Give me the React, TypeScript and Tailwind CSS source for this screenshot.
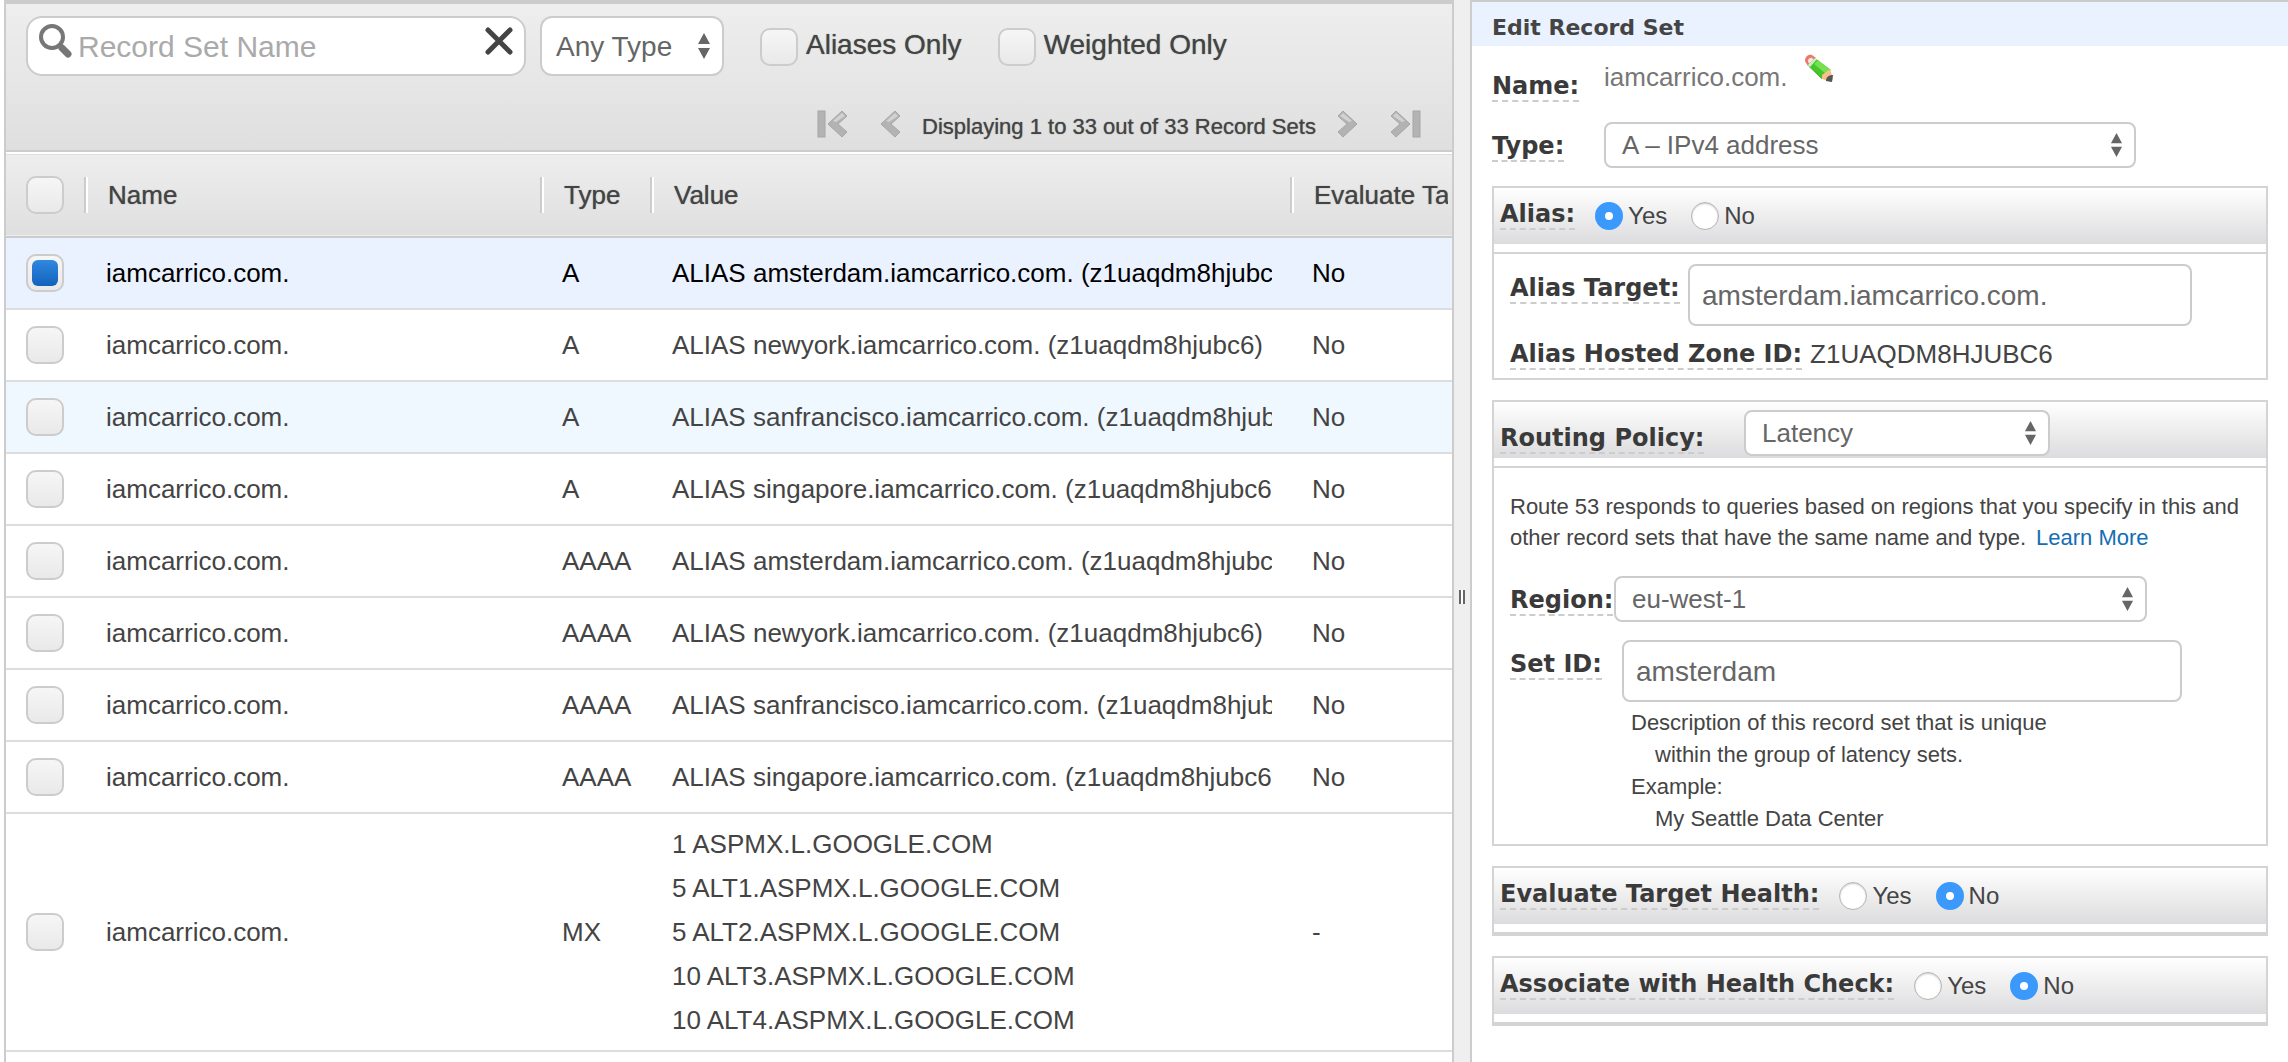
import React from "react";

type RecordRow = {
  name: string;
  type: string;
  values: string[];
  evaluate: string;
  state?: "selected" | "hover";
};

const ZONE = "(z1uaqdm8hjubc6)";

const RECORDS: RecordRow[] = [
  { name: "iamcarrico.com.", type: "A", values: [`ALIAS amsterdam.iamcarrico.com. ${ZONE}`], evaluate: "No", state: "selected" },
  { name: "iamcarrico.com.", type: "A", values: [`ALIAS newyork.iamcarrico.com. ${ZONE}`], evaluate: "No" },
  { name: "iamcarrico.com.", type: "A", values: [`ALIAS sanfrancisco.iamcarrico.com. ${ZONE}`], evaluate: "No", state: "hover" },
  { name: "iamcarrico.com.", type: "A", values: [`ALIAS singapore.iamcarrico.com. ${ZONE}`], evaluate: "No" },
  { name: "iamcarrico.com.", type: "AAAA", values: [`ALIAS amsterdam.iamcarrico.com. ${ZONE}`], evaluate: "No" },
  { name: "iamcarrico.com.", type: "AAAA", values: [`ALIAS newyork.iamcarrico.com. ${ZONE}`], evaluate: "No" },
  { name: "iamcarrico.com.", type: "AAAA", values: [`ALIAS sanfrancisco.iamcarrico.com. ${ZONE}`], evaluate: "No" },
  { name: "iamcarrico.com.", type: "AAAA", values: [`ALIAS singapore.iamcarrico.com. ${ZONE}`], evaluate: "No" },
  {
    name: "iamcarrico.com.",
    type: "MX",
    values: [
      "1 ASPMX.L.GOOGLE.COM",
      "5 ALT1.ASPMX.L.GOOGLE.COM",
      "5 ALT2.ASPMX.L.GOOGLE.COM",
      "10 ALT3.ASPMX.L.GOOGLE.COM",
      "10 ALT4.ASPMX.L.GOOGLE.COM",
    ],
    evaluate: "-",
  },
];

const ROW_STYLE = {
  selected: "bg-[#eaf2ff] text-black",
  hover: "bg-[#f0f8ff] text-[#444]",
  plain: "bg-white text-[#444]",
};

function CheckBox(props: React.InputHTMLAttributes<HTMLInputElement>) {
  return (
    <input
      type="checkbox"
      className="block size-[38px] shrink-0 appearance-none rounded-[10px] border-2 border-[#ccc] bg-linear-to-b from-[#f6f6f6] to-[#e9e9e9] p-1 checked:before:block checked:before:size-[26px] checked:before:rounded-md checked:before:bg-linear-to-b checked:before:from-[#3088e0] checked:before:to-[#1162bb] checked:before:content-['']"
      {...props}
    />
  );
}

function SelectArrows({ className }: { className: string }) {
  return (
    <svg viewBox="0 0 14 26" className={`pointer-events-none absolute top-1/2 -translate-y-1/2 fill-[#666] ${className}`} aria-hidden="true">
      <path d="M7 0 13 11H1zM7 26 13 15H1z" />
    </svg>
  );
}

function FormSelect({ id, value, className }: { id: string; value: string; className: string }) {
  return (
    <div className={`relative max-w-full ${className}`}>
      <select
        id={id}
        defaultValue={value}
        className="block h-[46px] w-full appearance-none rounded-lg border-2 border-[#ccc] bg-white pr-10 pl-4 text-[26px] leading-8 text-[#666]"
      >
        <option>{value}</option>
      </select>
      <SelectArrows className="right-[13px] h-6 w-[13px]" />
    </div>
  );
}

function FormInput({ id, value, className }: { id: string; value: string; className: string }) {
  return (
    <input
      id={id}
      type="text"
      defaultValue={value}
      className={`h-[62px] max-w-full rounded-lg border-2 border-[#ccc] bg-white px-3 pt-[2px] text-[28px] text-[#666] ${className}`}
    />
  );
}

const LABEL =
  "inline-block border-b-2 border-dashed border-[#ccc] font-['DejaVu_Sans',sans-serif] text-2xl/7 font-bold whitespace-nowrap text-[#3a3a3a]";

function FieldLabel({ htmlFor, children }: { htmlFor: string; children: React.ReactNode }) {
  return (
    <label htmlFor={htmlFor} className={LABEL}>
      {children}
    </label>
  );
}

function YesNo({ name, label, value }: { name: string; label: string; value: "Yes" | "No" }) {
  return (
    <fieldset className="flex items-start">
      <legend className={`float-left mr-5 ${LABEL}`}>{label}</legend>
      <div className="flex gap-6 pt-[2px]">
        {["Yes", "No"].map((option) => (
          <label key={option} className="flex gap-[5px] text-2xl/7 text-[#444]">
            <input
              type="radio"
              name={name}
              defaultChecked={option === value}
              className="size-7 appearance-none rounded-full border border-[#b4b4b4] bg-white shadow-[inset_0_1px_2px_#ccc] checked:border-[10px] checked:border-[#3b99fc] checked:shadow-none"
            />
            {option}
          </label>
        ))}
      </div>
    </fieldset>
  );
}

function Section({ header, headerClass, children }: { header: React.ReactNode; headerClass: string; children?: React.ReactNode }) {
  return (
    <section className="border-2 border-[#d4d4d4]">
      <div className="border-b-2 border-[#d4d4d4] pb-2">
        <div className={`flex h-14 items-start bg-linear-to-b from-white to-[#dcdcde] px-[6px] ${headerClass}`}>{header}</div>
      </div>
      {children}
    </section>
  );
}

function SearchIcon() {
  return (
    <svg viewBox="0 0 38 38" className="pointer-events-none absolute top-1 left-2 size-[38px]" fill="none" stroke="#777" aria-hidden="true">
      <circle cx="16" cy="15" r="11" strokeWidth="4" />
      <path d="m23 23 3 3" strokeWidth="4" />
      <path d="m26 26 6 6" strokeWidth="7" strokeLinecap="round" />
    </svg>
  );
}

function PagerIcon({ kind }: { kind: "first" | "prev" | "next" | "last" }) {
  const withBar = kind === "first" || kind === "last";
  const flip = kind === "next" || kind === "last";
  const width = withBar ? 31 : 21;
  return (
    <svg
      viewBox={`0 0 ${width} 28`}
      width={width}
      height={28}
      className={flip ? "-scale-x-100" : ""}
      fill="#b3b3b3"
      stroke="#a6a6a6"
      aria-hidden="true"
    >
      {withBar && <rect x="1" y="1" width="7" height="26" />}
      <g transform={withBar ? "translate(10 0)" : undefined}>
        <path d="M15 1 1 14l14 13 5-5-9-8 9-8z" />
        <path d="M15 3 6 11l3 1 9-6z" fill="#d2d2d2" stroke="none" />
      </g>
    </svg>
  );
}

function PencilIcon() {
  return (
    <svg viewBox="0 0 28 29" className="h-[29px] w-7" aria-hidden="true">
      <path d="M0 7C0 3 3 0 7 1l4 3-8 8-2-3z" fill="#e8796c" />
      <path d="M3 7c0-2 2-4 4-3l2 2-5 4z" fill="#fbe6e2" />
      <path d="m10 4 16 12-9 9L3 11z" fill="#46c62a" />
      <path d="m10 4 2 1-7 8-2-2z" fill="#d5eccb" />
      <path d="m13 6 12 10-4 4L9 10z" fill="#74e052" />
      <path d="m5 13 12 11v1L3 12z" fill="#38a522" />
      <path d="m25 15 3 10-2 3-9-3v-4z" fill="#f5c08a" />
      <path d="m28 21-1 7-6-1c0-4 3-6 7-6z" fill="#555" />
    </svg>
  );
}

function Toolbar() {
  return (
    <div className="border-t-4 border-b-2 border-[#ccc] bg-linear-to-b from-[#eee] to-[#dfdfdf]">
      <div className="flex items-start pt-3 pl-5">
        <div className="relative h-[60px] w-[500px] rounded-[16px] border-2 border-[#ccc] bg-white">
          <SearchIcon />
          <input
            type="text"
            aria-label="Record Set Name"
            placeholder="Record Set Name"
            className="h-full w-full bg-transparent pt-[2px] pr-14 pl-[50px] text-[30px] text-[#666] outline-none placeholder:text-[#aaa]"
          />
          <button type="button" aria-label="Clear search" className="absolute top-[9px] right-[11px]">
            <svg viewBox="0 0 28 28" className="size-7" stroke="#444" strokeWidth="5" strokeLinecap="round" aria-hidden="true">
              <path d="M3 3 25 25M25 3 3 25" />
            </svg>
          </button>
        </div>
        <div className="relative ml-[14px]">
          <select
            aria-label="Record type"
            className="block h-[60px] w-[184px] appearance-none rounded-[12px] border-2 border-[#ccc] bg-white pt-[2px] pl-[14px] text-[28px] text-[#666]"
          >
            <option>Any Type</option>
          </select>
          <SelectArrows className="right-[13px] h-[26px] w-[14px]" />
        </div>
        <div className="flex gap-9 pt-3 pl-9 text-[28px]/[34px] text-[#444] text-shadow-[0_0_1px_#666]">
          <label className="flex gap-2 whitespace-nowrap">
            <CheckBox />
            Aliases Only
          </label>
          <label className="flex gap-2 whitespace-nowrap">
            <CheckBox />
            Weighted Only
          </label>
        </div>
      </div>
      <div className="flex h-[74px] items-start justify-end gap-8 pt-[34px] pr-[31px]">
        <button type="button" aria-label="First page">
          <PagerIcon kind="first" />
        </button>
        <div className="flex gap-4">
          <button type="button" aria-label="Previous page" className="h-7">
            <PagerIcon kind="prev" />
          </button>
          <span className="w-[404px] text-center text-[22px]/[34px] whitespace-nowrap text-[#444] text-shadow-[0_0_1px_#666]">
            Displaying 1 to 33 out of 33 Record Sets
          </span>
          <button type="button" aria-label="Next page" className="h-7">
            <PagerIcon kind="next" />
          </button>
        </div>
        <button type="button" aria-label="Last page">
          <PagerIcon kind="last" />
        </button>
      </div>
    </div>
  );
}

function HeaderCell({ children, last = false }: { children: React.ReactNode; last?: boolean }) {
  return (
    <th scope="col" className="overflow-hidden p-0 font-normal">
      <div className={`flex h-9 items-center justify-between ${last ? "mr-1 overflow-hidden" : ""}`}>
        <span className="pl-5 whitespace-nowrap">{children}</span>
        {!last && <Divider />}
      </div>
    </th>
  );
}

function Divider() {
  return <span className="h-9 w-1 shrink-0 border-r-2 border-l-2 border-r-white border-l-[#ccc]" />;
}

function RecordTable() {
  return (
    <table className="w-full table-fixed border-collapse text-left text-[26px]">
      <colgroup>
        <col className="w-[82px]" />
        <col className="w-[456px]" />
        <col className="w-[110px]" />
        <col className="w-[640px]" />
        <col />
      </colgroup>
      <thead>
        <tr className="h-[84px] border-t-2 border-b-2 border-t-white border-b-[#ccc] bg-linear-to-b from-[#eee] to-[#dfdfdf] text-[#444] text-shadow-[0_0_1px_#666]">
          <th scope="col" className="p-0 font-normal">
            <div className="flex items-center justify-between pl-5">
              <CheckBox aria-label="Select all record sets" />
              <Divider />
            </div>
          </th>
          <HeaderCell>Name</HeaderCell>
          <HeaderCell>Type</HeaderCell>
          <HeaderCell>Value</HeaderCell>
          <HeaderCell last>Evaluate Target Health</HeaderCell>
        </tr>
      </thead>
      <tbody>
        {RECORDS.map((record, index) => (
          <tr key={index} className={`h-[72px] border-b-2 border-[#ddd] ${ROW_STYLE[record.state ?? "plain"]}`}>
            <td className="py-0 pl-5">
              <CheckBox aria-label={`Select ${record.name} ${record.type}`} defaultChecked={record.state === "selected"} />
            </td>
            <td className="py-0 pl-[18px]">{record.name}</td>
            <td className="py-0 pl-[18px]">{record.type}</td>
            <td className={record.values.length > 1 ? "py-2 pr-[22px] pl-[18px]" : "py-0 pr-[22px] pl-[18px]"}>
              {record.values.map((value) => (
                <div key={value} className="overflow-hidden leading-[44px] whitespace-nowrap">
                  {value}
                </div>
              ))}
            </td>
            <td className="py-0 pl-[18px]">{record.evaluate}</td>
          </tr>
        ))}
      </tbody>
    </table>
  );
}

function EditPanel() {
  return (
    <aside className="min-w-0 border-t-2 border-l-2 border-[#ccc] bg-white">
      <h2 className="bg-[#eaf2ff] px-5 pt-3 pb-1 font-['DejaVu_Sans',sans-serif] text-[22px]/7 font-bold text-[#444]">
        Edit Record Set
      </h2>
      <form className="px-5 pt-2 pb-9">
        <div className="flex items-start">
          <div className="w-28 pt-[18px]">
            <span className={LABEL}>Name:</span>
          </div>
          <span className="pt-[7px] text-[26px]/8 text-[#777]">iamcarrico.com.</span>
          <button type="button" aria-label="Edit name" className="ml-[18px]">
            <PencilIcon />
          </button>
        </div>
        <div className="mt-5 flex items-start">
          <div className="w-28 pt-[10px]">
            <FieldLabel htmlFor="type">Type:</FieldLabel>
          </div>
          <FormSelect id="type" value="A – IPv4 address" className="w-[532px]" />
        </div>

        <div className="mt-[18px] flex flex-col gap-5">
          <Section headerClass="pt-3" header={<YesNo name="alias" label="Alias:" value="Yes" />}>
            <div className="px-4 pt-[10px] pb-2">
              <div className="flex items-start">
                <div className="w-[178px] shrink-0 pt-[10px]">
                  <FieldLabel htmlFor="alias-target">Alias Target:</FieldLabel>
                </div>
                <FormInput id="alias-target" value="amsterdam.iamcarrico.com." className="w-[504px]" />
              </div>
              <div className="mt-[14px] flex items-start gap-2">
                <span className={LABEL}>Alias Hosted Zone ID:</span>
                <span className="text-[26px]/7 text-[#444]">Z1UAQDM8HJUBC6</span>
              </div>
            </div>
          </Section>

          <Section
            headerClass="pt-2"
            header={
              <>
                <div className="w-[244px] shrink-0 pt-[14px]">
                  <FieldLabel htmlFor="routing-policy">Routing Policy:</FieldLabel>
                </div>
                <FormSelect id="routing-policy" value="Latency" className="w-[306px]" />
              </>
            }
          >
            <div className="px-4 pt-[23px] pb-[10px] text-[#444]">
              <p className="text-[22px]/[31px]">
                Route 53 responds to queries based on regions that you specify in this and other record sets that have the same
                name and type.
                <a href="#learn-more" className="ml-[10px] text-[#146eb4]">
                  Learn More
                </a>
              </p>
              <div className="mt-[23px] flex items-start">
                <div className="w-[104px] shrink-0 pt-[10px]">
                  <FieldLabel htmlFor="region">Region:</FieldLabel>
                </div>
                <FormSelect id="region" value="eu-west-1" className="w-[533px]" />
              </div>
              <div className="mt-[18px] flex items-start">
                <div className="w-28 shrink-0 pt-[10px]">
                  <FieldLabel htmlFor="set-id">Set ID:</FieldLabel>
                </div>
                <FormInput id="set-id" value="amsterdam" className="w-[560px]" />
              </div>
              <div className="mt-[5px] -mb-px pl-[121px] text-[22px]/8">
                <p>Description of this record set that is unique</p>
                <p className="pl-6">within the group of latency sets.</p>
                <p>Example:</p>
                <p className="pl-6">My Seattle Data Center</p>
              </div>
            </div>
          </Section>

          <Section headerClass="pt-3" header={<YesNo name="evaluate" label="Evaluate Target Health:" value="No" />} />
          <Section headerClass="pt-3" header={<YesNo name="health-check" label="Associate with Health Check:" value="No" />} />
        </div>
      </form>
    </aside>
  );
}

export default function App() {
  return (
    <div className="grid min-h-screen grid-cols-[minmax(0,1450fr)_16px_minmax(0,818fr)] bg-white pl-1 font-['Liberation_Sans',Arial,sans-serif]">
      <main className="min-w-0 overflow-hidden border-r-2 border-l-2 border-[#ccc]">
        <Toolbar />
        <RecordTable />
      </main>
      <div role="separator" aria-orientation="vertical" className="flex items-start justify-center bg-[#efefef] pt-[590px]">
        <span className="h-[14px] w-[6px] border-r-2 border-l-2 border-[#666] bg-white" />
      </div>
      <EditPanel />
    </div>
  );
}
